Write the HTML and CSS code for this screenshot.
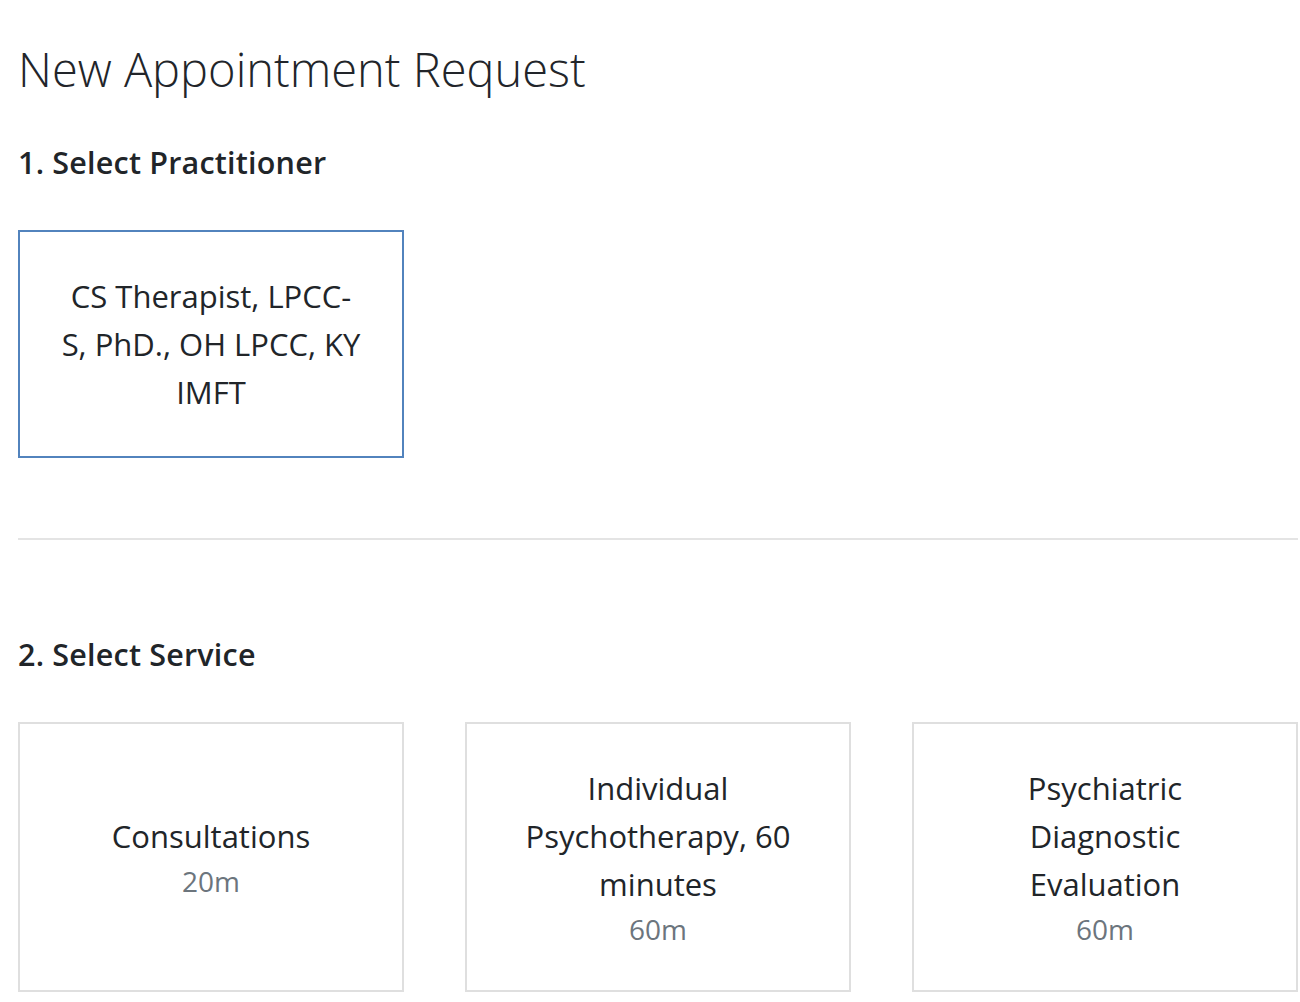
FILE: index.html
```html
<!DOCTYPE html>
<html lang="en">
<head>
<meta charset="utf-8">
<title>New Appointment Request</title>
<link rel="stylesheet" href="styles.css">
</head>
<body>
<main class="page">
  <h1 class="page-title">New Appointment Request</h1>

  <section class="step">
    <h2 class="step-title">1. Select Practitioner</h2>
    <div class="options">
      <div class="option option--selected">
        <div class="option-name">CS Therapist, LPCC-S, PhD., OH LPCC, KY IMFT</div>
      </div>
    </div>
  </section>

  <hr class="divider">

  <section class="step step--service">
    <h2 class="step-title">2. Select Service</h2>
    <div class="options">
      <div class="option">
        <div class="option-name">Consultations</div>
        <div class="option-meta">20m</div>
      </div>
      <div class="option">
        <div class="option-name">Individual Psychotherapy, 60 minutes</div>
        <div class="option-meta">60m</div>
      </div>
      <div class="option">
        <div class="option-name">Psychiatric Diagnostic Evaluation</div>
        <div class="option-meta">60m</div>
      </div>
    </div>
  </section>
</main>
</body>
</html>
```
FILE: styles.css
```css
* { box-sizing: border-box; }

html, body {
  margin: 0;
  background: #ffffff;
}

body {
  font-family: "Open Sans", "Noto Sans", Arial, sans-serif;
  color: #212529;
}

.page {
  padding: 41px 2px 0 18px;
}

.page-title {
  margin: 0;
  font-size: 47px;
  line-height: 56px;
  font-weight: 300;
  color: #22252a;
}

.step-title {
  margin: 47px 0 0;
  font-size: 30.5px;
  line-height: 36px;
  font-weight: 600;
  letter-spacing: 0.2px;
  color: #212529;
}

.step--service .step-title {
  margin-top: 96px;
}

.options {
  display: grid;
  grid-template-columns: repeat(3, 1fr);
  column-gap: 61px;
  margin-top: 50px;
}

.option {
  display: flex;
  flex-direction: column;
  justify-content: center;
  align-items: center;
  text-align: center;
  padding: 40px;
  border: 2px solid #dfdfdf;
  background: #fff;
}

.option--selected {
  border-color: #5283bd;
}

.option-name {
  font-size: 31px;
  line-height: 48px;
  color: #212529;
}

.option-meta {
  font-size: 28px;
  line-height: 42px;
  color: #6c757d;
}

.divider {
  margin: 80px 0 0;
  border: 0;
  height: 2px;
  background: #e4e4e4;
}
```
